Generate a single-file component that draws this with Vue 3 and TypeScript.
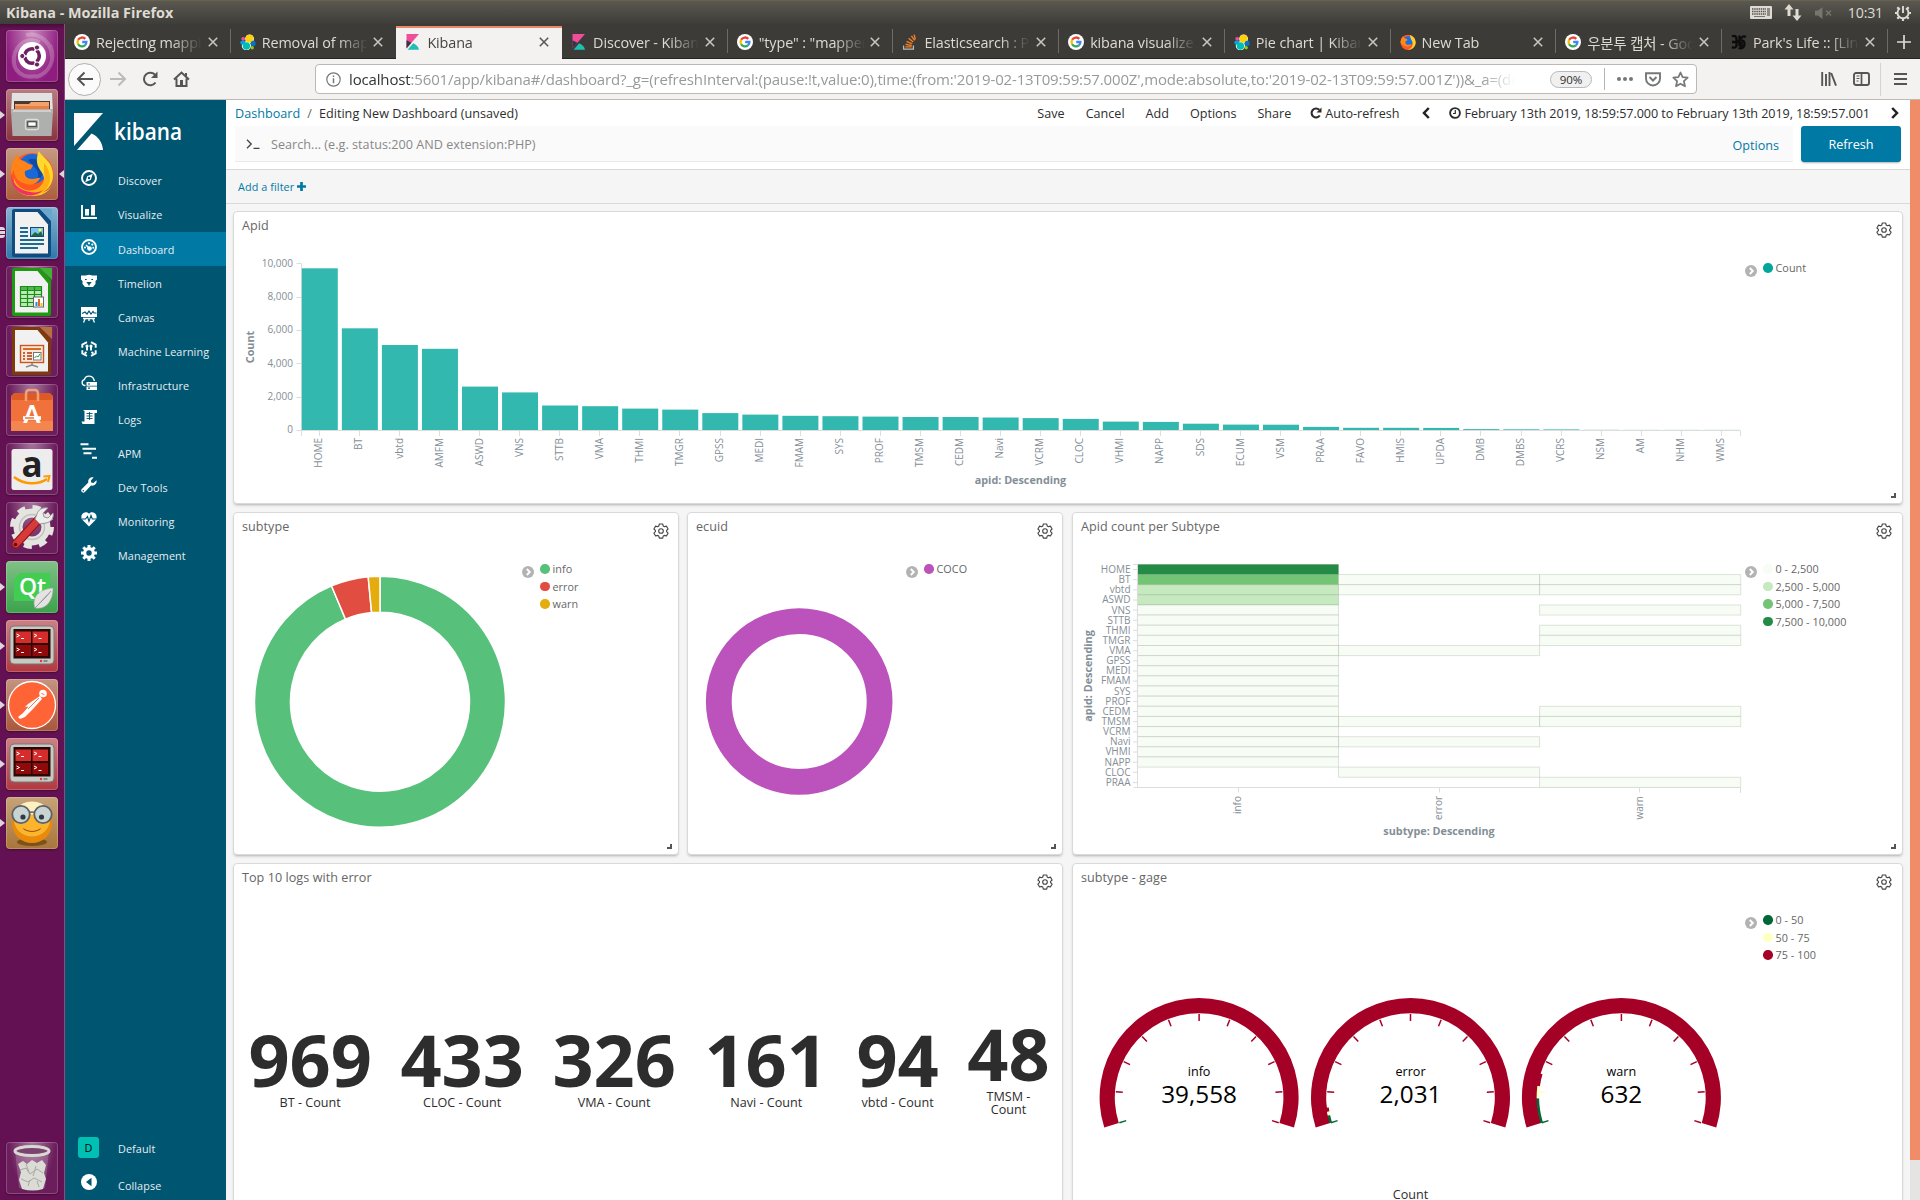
<script setup lang="ts">
interface Tab { title: string; icon: string; active?: boolean; noSep?: boolean }
interface NavItem { label: string; icon: string; active?: boolean }
interface LauncherItem { icon: string; tone: string; running?: boolean; many?: boolean; focused?: boolean }
interface LegendItem { label: string; color: string }

/* ---------- browser chrome ---------- */
const google = '<circle cx="8" cy="8" r="8" fill="#fff"/><g fill="none" stroke-width="2.3"><path d="M11.3 4.9A4.5 4.5 0 0 0 4.1 5.8" stroke="#ea4335"/><path d="M4.1 5.8A4.6 4.6 0 0 0 4.1 10.2" stroke="#fbbc05"/><path d="M4.1 10.2A4.5 4.5 0 0 0 10.9 11.4" stroke="#34a853"/><path d="M10.9 11.4A4.4 4.4 0 0 0 12.4 8H8.2" stroke="#4285f4"/></g>'
const elastic = '<circle cx="9.6" cy="4.8" r="4.4" fill="#fff"/><circle cx="6.400" cy="11.800" r="4.600" fill="#fff"/><circle cx="9.6" cy="4.8" r="4" fill="#fed10a"/><circle cx="3.2" cy="4.8" r="1.9" fill="#f04e98"/><ellipse cx="2.800" cy="8.6" rx="2.6" ry="2.2" fill="#0a9fdc"/><circle cx="6.4" cy="12" r="3.700" fill="#00bfb3"/><ellipse cx="13.2" cy="9.400" rx="2.500" ry="2.6" fill="#0077cc"/><circle cx="12.200" cy="13.7" r="1.7" fill="#93c90e"/>'
const kibanaFav = '<path d="M1.5 0H14L1.5 14.5z" fill="#f04e98"/><path d="M1.5 6.2L6.4 8.7L1.5 14.5z" fill="#343741"/><path d="M2.6 15.8L8.2 9.3C11.5 10.6 13.6 13 14 15.8z" fill="#20bfb3"/>'
const stack = '<path d="M1.6 11.5V15.2H11.4V11.5" fill="none" stroke="#bcbbbb" stroke-width="1.3"/><g stroke="#f48024" stroke-width="1.4"><path d="M3.4 12.9H9.6M3.6 10.3L9.7 11.6M4.6 7.3L10.2 9.9M6.6 4.2L11.2 8M9.4 1.8L12.6 6.4M12.1 .6L13.4 5.4"/></g>'
const foxFav = '<circle cx="8" cy="8.3" r="7.6" fill="#ff5a1f"/><circle cx="8.2" cy="7" r="4.8" fill="#1c6fe0"/><path d="M10 1c4 1.600 6 4.500 5.600 8.500-.5 3.800-4 6.500-8 6.300 4-1.100 5.600-3.600 5-7-.4-2.600-2.600-4-2.600-7.800z" fill="#ffcf2e"/><path d="M.6 8C.7 5 2 3 3.300 2c0 1.500.8 2.300 2.700 2.600l1.800 1.500-2.400 1.300c-.4 2 .8 3.400 2.800 3.400 1.600 0 2.400-.6 3.200-.5-1 2-3.800 3-6.400 1.700C2.600 11 1 9.800.6 8z" fill="#ff8a16"/>'
const gothic = '<g fill="none" stroke="#0c0c0c" stroke-width="2.3"><path d="M1 2.500c3-1.500 4.500 0 4.500 2.500v7c-1 2-3 2-4.500 1M1 8h5c5-3 7.500-1.500 7.500 2s-3 5-6 4M8.500 1.500v11M10 5c1-3 3-3 5-2M10.500 8v6"/></g>'
const tabs: Tab[] = [
  { title: 'Rejecting mapping', icon: google },
  { title: 'Removal of mapping', icon: elastic, noSep: true },
  { title: 'Kibana', icon: kibanaFav, active: true, noSep: true },
  { title: 'Discover - Kibana', icon: kibanaFav },
  { title: '"type" : "mapper_', icon: google },
  { title: 'Elasticsearch : Pa', icon: stack },
  { title: 'kibana visualize -', icon: google },
  { title: 'Pie chart | Kibana', icon: elastic },
  { title: 'New Tab', icon: foxFav },
  { title: '우분투 캡처 - Google', icon: google },
  { title: "Park's Life :: [Linux", icon: gothic }
]

/* ---------- desktop launcher ---------- */
const sheet = (edge: string, corner: string): string =>
  `<path d="M8 2H34L45 14V48Q45 50 43 50H8Q6 50 6 48V4Q6 2 8 2z" fill="${edge}"/><path d="M34 2H46V14z" fill="${corner}"/><path d="M9 5H31.500L42 17.500V46.500H9z" fill="#f1f1f1"/>`
const terminal = '<rect x="4" y="6" width="44" height="38" rx="4" fill="#c9c9c4" stroke="#777" stroke-width="1"/><rect x="7.500" y="9" width="37" height="29.500" fill="#2a0806"/><path d="M9.500 11.500h15.500V23H9.500z M26.500 11.500H42V23H26.500z" fill="#d62c2c"/><path d="M9.500 25h15.500v11H9.500z M26.500 25H42v11H26.500z" fill="#8f0b0b"/><path d="M10.500 14l3 1.500-3 1.500M15 18.500h3M28 14l3 1.500-3 1.500M32.500 18.500h3M10.500 28l3 1.500-3 1.500M15 32.500h3M28 28l3 1.500-3 1.500M32.500 32.500h3" fill="none" stroke="#fff" stroke-width="1"/><circle cx="35" cy="41" r="1.200" fill="#e33"/><rect x="37.500" y="40" width="4" height="2" fill="#888"/>'
const launcher: LauncherItem[] = [
  { tone: 'dash', icon: '<path d="M8 34C6 18 18 6 34 12M44 15c6 14 0 28-14 32M20 5c14-3 26 8 26 22M30 46C16 49 6 40 8 27" fill="none" stroke="#fff" stroke-opacity=".22" stroke-width="4"/><circle cx="26" cy="26" r="14" fill="#fff"/><circle cx="26" cy="26" r="7.300" fill="none" stroke="#6d2160" stroke-width="3.600"/><g stroke="#fff" stroke-width="1.600"><path d="M26 26L17 26M26 26L30.500 18M26 26L30.500 34"/></g><circle cx="26" cy="26" r="4.500" fill="#fff"/><g fill="#6d2160" stroke="#fff" stroke-width="1"><circle cx="16.300" cy="26" r="2.600"/><circle cx="31" cy="17.500" r="2.600"/><circle cx="31" cy="34.500" r="2.600"/></g>' },
  { tone: 'files', running: true, icon: '<path d="M6 4H46L47 24H5z" fill="#e2e2e2"/><path d="M8 12H44V23H8z" fill="#4a3a33"/><path d="M9 15h14l2-2h18v7H9z" fill="#f2a36b"/><path d="M9 17h34v4H9z" fill="#e9803f"/><path d="M5 20h42l-1.500 27h-39z" fill="#aeb0ae"/><path d="M7 21h38v2H7z" fill="#cfcfcf"/><rect x="19.500" y="30.500" width="13" height="10" rx="2" fill="#999" stroke="#ddd" stroke-width="1.300"/><rect x="21.800" y="32.800" width="8.400" height="4.500" fill="#fff" stroke="#333" stroke-width="1"/>' },
  { tone: 'fox', running: true, focused: true, icon: '<circle cx="26" cy="26.500" r="21.500" fill="#ff5722"/><circle cx="26.500" cy="21" r="15" fill="#1768d8"/><path d="M22 12c6-3 13 0 15 6s-2 14-8 16c4-5 4-9 1-13z" fill="#104aa8"/><path d="M33 3c2 5 9 8 12 15 5 12 0 23-10 27 6-1 11-6 12-11-3 11-14 16-25 13 11 0 17-8 16-17-.7-5-4-7-6-12-2-5-1-11 1-15z" fill="#ffd92e"/><path d="M38 25c2 8-3 15-10 17-10 2-18-4-20-12-1 12 8 19 19 18 11-1 18-10 17-20-1-5-3-10-6-13z" fill="#ffae13"/><path d="M5 27C4 18 8 10 12 6c0 4 2 6 6 7l5 3 4 1-2 4-6 2c-1 5 2 8 7 8 4 0 6-2 8-1-2 5-8 8-14 6-8-2-12-7-12-14z" fill="#ff8316"/><path d="M5 27c3 12 10 15 19 17 6 1 10 0 13-2-7 8-21 7-28-2-3-4-4-8-4-13z" fill="#f0306b"/>' },
  { tone: 'writer', running: true, many: true, icon: sheet('#0f4d80', '#6aa7cc') + '<g stroke="#1b6a94" stroke-width="1.900"><path d="M14 21h8M14 25h8M14 29h8M14 33h24M14 37h24M14 41h18"/></g><rect x="24.500" y="20.500" width="13" height="9" fill="#7cc4ee" stroke="#164a70"/><path d="M25 29l4-4 3 2 3-3 2 5z" fill="#264"/><circle cx="34" cy="23" r="1.500" fill="#ff4"/>' },
  { tone: 'plain', icon: sheet('#1d9a10', '#3fb332') + '<path d="M14 20h22v20H14z" fill="#b9ecb4"/><path d="M14 20h22v4H14z" fill="#4fb848"/><path d="M14.500 20.500h21v20h-21zM14 24.500h22M14 28.500h22M14 32.500h22M14 36.500h22M21.500 20v20M28.500 20v20" fill="none" stroke="#1c8b18" stroke-width="1.200"/><rect x="27.500" y="31" width="10" height="10" fill="#fff" stroke="#666"/><path d="M29.500 36h2v4h-2z" fill="#1d8be0"/><path d="M32 33h2v7h-2z" fill="#e06a1d"/><path d="M34.500 37h2v3h-2z" fill="#f5c21b"/>' },
  { tone: 'plain', icon: sheet('#7f3a0c', '#b5713f') + '<rect x="14.500" y="20.500" width="23" height="17" fill="#fbe8da" stroke="#c9571a" stroke-width="1.400"/><path d="M17 24h18" stroke="#d96b22" stroke-width="2"/><path d="M17 28h2M21 28h5M17 31h2M21 31h5M17 34h2M21 34h5" stroke="#b3390c" stroke-width="1.500"/><rect x="27.500" y="27.500" width="7.500" height="7.500" fill="#fff" stroke="#777"/><path d="M28.500 33l2-2 1.500 1 2-3" stroke="#2a9d2a" fill="none"/><path d="M26 38v2l-6 2M26 40l6 2" stroke="#888" stroke-width="1.500" fill="none"/>' },
  { tone: 'plain', icon: '<path d="M5 12h42v35H5z" fill="#f0713a"/><path d="M5 12l3-3H44l3 3-1 4H6z" fill="#dd5a26"/><path d="M5 37h42v10H5z" fill="#f4854f"/><path d="M20 17V10q0-4 3-4h6q3 0 3 4v7" fill="none" stroke="#f2a07a" stroke-width="2.500"/><text x="26" y="39" text-anchor="middle" font-family="Lato" font-weight="900" font-size="24" fill="#fff">A</text><path d="M17 34h18" stroke="#fff" stroke-width="3.600"/><path d="M19 34h9" stroke="#f0713a" stroke-width="1.500"/>' },
  { tone: 'plain', icon: '<rect x="5.500" y="6" width="41" height="41" rx="2.500" fill="#ededed"/><text x="26" y="33.500" text-anchor="middle" font-family="Open Sans" font-weight="700" font-size="35" fill="#222">a</text><path d="M8 34c10 8 24 8 33 2" stroke="#ff9900" stroke-width="2.600" fill="none"/><path d="M37.500 33.500l6-.5-1.500 6" stroke="#ff9900" stroke-width="2" fill="none"/>' },
  { tone: 'plain', icon: '<g fill="none" stroke="#e4e4e0"><circle cx="26" cy="25" r="14" stroke-width="9"/><circle cx="26" cy="25" r="19.500" stroke-width="5" stroke-dasharray="8 7.300"/></g><circle cx="26" cy="25" r="12.500" fill="none" stroke="#c2c2be" stroke-width="1.500"/><path d="M10 42L33 17" stroke="#9d1414" stroke-width="9" stroke-linecap="round"/><path d="M10 42L33 17" stroke="#d73a3a" stroke-width="6.500" stroke-linecap="round"/><circle cx="9.500" cy="42.500" r="1.800" fill="#5c1010"/><path d="M29 17l5 5 6-1c5-1 8-5 7-10l-5 5-4-1-1-4 5-5c-6-1-10 2-11 6z" fill="#eee" stroke="#999" stroke-width="1"/>' },
  { tone: 'qt', running: true, icon: '<path d="M14 12H44V40H8V18z" fill="#41cd52"/><text x="26.500" y="34" text-anchor="middle" font-family="Open Sans" font-weight="600" font-size="23" fill="#fff">Qt</text><path d="M47 27C34 28 25 36 29 47c11 2 18-7 18-20z" fill="#e3e3e3" stroke="#aaa" stroke-width=".6"/><path d="M29 47C34 42 40 36 45 30" stroke="#999" stroke-width="1"/>' },
  { tone: 'term', running: true, icon: terminal },
  { tone: 'postman', running: true, icon: '<circle cx="26" cy="26" r="23.500" fill="#ff6436" stroke="#fff" stroke-width="1.300"/><circle cx="37" cy="14.500" r="3.800" fill="#fff"/><path d="M34 17L22 25L19 28L22.500 27.500L17 34L12 38L14 40L19 38L27 30L36 20z" fill="#fff"/><path d="M33 19L22 30M35.500 14.500l3 1" stroke="#ff6436" stroke-width=".9"/>' },
  { tone: 'term', running: true, icon: terminal },
  { tone: 'face', running: true, icon: '<ellipse cx="26" cy="45" rx="15" ry="4" fill="#5a3506" fill-opacity=".6"/><ellipse cx="26" cy="26" rx="20" ry="20" fill="#e88a0c"/><ellipse cx="26" cy="22.500" rx="18" ry="17" fill="#fbb42c"/><ellipse cx="26" cy="11" rx="13" ry="6.500" fill="#fff0c4"/><path d="M23 16q3-2 6 0" stroke="#59636b" stroke-width="1.600" fill="none"/><g stroke="#59636b" stroke-width="1.800" fill="#c9d3cf"><circle cx="15" cy="17.500" r="8.700"/><circle cx="37" cy="17.500" r="8.700"/></g><circle cx="17" cy="20" r="2.600" fill="#2c3b44"/><circle cx="35.500" cy="20" r="2.600" fill="#2c3b44"/><path d="M17 31c5 4 13 4 18 0-2 5-16 5-18 0z" fill="#8b3b04"/>' }
]
const trash = '<path d="M9 9l4 37q13 4 26 0l4-37z" fill="#fff" fill-opacity=".18"/><ellipse cx="26" cy="9" rx="17" ry="4.500" fill="#7b4470" stroke="#d9d9d4" stroke-width="3"/><path d="M12 22l5-3 4 3 5-4 5 3 5-3 4 5-2 8 2 6-3 10q-10 3-21 0l-3-9 2-8z" fill="#dcdcd6"/><path d="M14 28l6-2 4 6 7-5 6 4M15 37l7 3 6-4 8 4M20 22l3 8M30 24l-3 10M22 44l2-6M33 45l-2-6" fill="none" stroke="#a9a9a4" stroke-width="1"/>'

/* ---------- Kibana navigation ---------- */
const nav: NavItem[] = [
  { label: 'Discover', icon: '<circle cx="8" cy="8" r="7" fill="none" stroke="#fff" stroke-width="1.900"/><path d="M11.800 3.800L9.800 9.800L4.200 12.200L6.200 6.200z" fill="#fff"/><circle cx="8" cy="8" r="1.200" fill="#005571"/>' },
  { label: 'Visualize', icon: '<path d="M1 1v13h15" fill="none" stroke="#fff" stroke-width="1.900"/><path d="M4 5h4v6.500H4zM10 1h4v10.500h-4z" fill="#fff"/>' },
  { label: 'Dashboard', active: true, icon: '<circle cx="8" cy="8" r="7" fill="none" stroke="#fff" stroke-width="1.900"/><circle cx="8.500" cy="9.500" r="2.300" fill="#fff"/><path d="M5 6L8.500 9.500" stroke="#fff" stroke-width="1.500"/><g fill="#fff"><circle cx="8" cy="4.300" r="1.100"/><circle cx="11.300" cy="5.600" r="1.100"/><circle cx="4" cy="8.600" r="1"/><circle cx="12.200" cy="8.800" r="1"/></g>' },
  { label: 'Timelion', icon: '<path d="M0 2.500h4.500L8 1.800l3.500.7H16v4l-1.500 1.500v3L12 14H4L1.500 11V8L0 6.500z" fill="#fff"/><path d="M4 6.500h1.700M10.300 6.500H12M6.500 9.500h3L8 11.500zM8 11v1.500" stroke="#005571" stroke-width="1.200" fill="#005571"/>' },
  { label: 'Canvas', icon: '<path d="M0 0h16v10H0z" fill="#fff"/><path d="M1 6.500L4 5l2 2 2-3 2 3 2-2.500L13 6h2.500" fill="none" stroke="#005571" stroke-width="1.200"/><path d="M2 11.500h12M4.500 11l-2 4.500M8 11v3M11.500 11l2 4.500" stroke="#fff" stroke-width="1.300"/>' },
  { label: 'Machine Learning', icon: '<g fill="none" stroke="#fff" stroke-width="1.900"><path d="M6 1.200L1.300 3.600v3.200M1.300 9.300v3.200l4.700 2.400M10 1.200l4.700 2.400v3.200M14.700 9.300v3.200l-4.700 2.400M6 4v5.500M10 4v5.500M5.500 11l-1.800 1.500M10.500 11l1.800 1.500"/></g><g fill="#fff"><circle cx="6" cy="5" r="1.600"/><circle cx="10" cy="5" r="1.600"/></g>' },
  { label: 'Infrastructure', icon: '<path d="M4.500 10.500H3.500A3 3 0 0 1 3.300 4.700A5 5 0 0 1 12.800 4.400L13.500 6" fill="none" stroke="#fff" stroke-width="1.400"/><path d="M5.500 7H16v3.700H5.500zM5.500 11.600H16V15H5.500z" fill="#fff"/><path d="M7 9h2M7 13.200h2" stroke="#005571" stroke-width="1.200"/>' },
  { label: 'Logs', icon: '<path d="M2 1h14v3h-2.500v11H1.500L.5 12.500H3.500V2z" fill="#fff"/><path d="M5.500 4.500h6M5.500 7h6M5.500 9.500h6M8.500 3v8" stroke="#005571" stroke-width=".9"/>' },
  { label: 'APM', icon: '<path d="M-.5 1.300H7.500M1.500 5.800H15M2.500 10.200H10.500M11 14.700H16" stroke="#fff" stroke-width="2"/>' },
  { label: 'Dev Tools', icon: '<path d="M15.500 3.300L12.500 6L10.200 5.600L9.900 3.500L12.600.5C9.500-.3 6.800 2 7.300 5.500L.6 12.300C-.8 14 1.800 16.800 3.700 15.300L10 8.600C13.500 9.300 16.300 6.500 15.500 3.300z" fill="#fff"/><circle cx="2.300" cy="13.700" r=".8" fill="#005571"/>' },
  { label: 'Monitoring', icon: '<path d="M8 15.500L1.300 8.800C-2 4 4-1.500 8 2.800C12-1.500 18 4 14.700 8.800z" fill="#fff"/><path d="M1 8h3.500L6.500 5.500L8 10.500L10 4.500L11.300 8H15" fill="none" stroke="#005571" stroke-width="1.100"/>' },
  { label: 'Management', icon: '<circle cx="8" cy="8" r="4.300" fill="none" stroke="#fff" stroke-width="3.200"/><path d="M8 0v3M8 13v3M0 8h3M13 8h3M2.300 2.300l2.200 2.200M11.500 11.500l2.200 2.200M2.300 13.700l2.200-2.200M11.500 4.500l2.200-2.200" stroke="#fff" stroke-width="3"/>' }
]

/* ---------- charts ---------- */
const bars: [string, number][] = [
  ['HOME', 161.7], ['BT', 101.7], ['vbtd', 85], ['AMFM', 81.2], ['ASWD', 43.4], ['VNS', 37.6], ['STTB', 24.5], ['VMA', 23.8],
  ['THMI', 21.4], ['TMGR', 20.4], ['GPSS', 16.9], ['MEDI', 15.4], ['FMAM', 14.2], ['SYS', 13.8], ['PROF', 13.4], ['TMSM', 13],
  ['CEDM', 13], ['Navi', 12.5], ['VCRM', 11.9], ['CLOC', 11.1], ['VHMI', 8.4], ['NAPP', 8.1], ['SDS', 6.3], ['ECUM', 5.4],
  ['VSM', 5.3], ['PRAA', 3.1], ['FAVO', 2.2], ['HMIS', 2.2], ['UPDA', 2.1], ['DMB', 0.9], ['DMBS', 0.7], ['VCRS', 0.6],
  ['NSM', 0.15], ['AM', 0.1], ['NHM', 0.1], ['WMS', 0.1]
]
const yTicks = ['10,000', '8,000', '6,000', '4,000', '2,000', '0']

const heatRows = ['HOME', 'BT', 'vbtd', 'ASWD', 'VNS', 'STTB', 'THMI', 'TMGR', 'VMA', 'GPSS', 'MEDI', 'FMAM', 'SYS', 'PROF', 'CEDM', 'TMSM', 'VCRM', 'Navi', 'VHMI', 'NAPP', 'CLOC', 'PRAA']
const heatCols = ['info', 'error', 'warn']
const shades = ['#f7fcf5', '#c7e9c0', '#74c476', '#238b45']
const rowH = 10.136
const colW = 201.1
const heatCells: { c: number; r: number; fill: string }[] = [
  ...heatRows.slice(0, 20).map((_, r) => ({ c: 0, r, fill: shades[r === 0 ? 3 : r === 1 ? 2 : r < 4 ? 1 : 0] })),
  ...[1, 2, 8, 15, 17, 20].map(r => ({ c: 1, r, fill: shades[0] })),
  ...[1, 2, 4, 6, 7, 14, 15, 21].map(r => ({ c: 2, r, fill: shades[0] }))
]

const point = (cx: number, cy: number, r: number, deg: number): string => {
  const a = (deg - 90) * Math.PI / 180
  return `${(cx + r * Math.cos(a)).toFixed(2)} ${(cy + r * Math.sin(a)).toFixed(2)}`
}
const ring = (cx: number, cy: number, ro: number, ri: number, from: number, to: number): string => {
  const big = to - from > 180 ? 1 : 0
  return `M${point(cx, cy, ro, from)}A${ro} ${ro} 0 ${big} 1 ${point(cx, cy, ro, to)}L${point(cx, cy, ri, to)}A${ri} ${ri} 0 ${big} 0 ${point(cx, cy, ri, from)}Z`
}
const slices = [
  { color: '#57c17b', from: 0, to: 337.3 },
  { color: '#e24d42', from: 337.3, to: 354.6 },
  { color: '#e5ac0e', from: 354.6, to: 360 }
]

const sweep = 107.6
const gauges = [
  { name: 'info', text: '39,558', value: 39558, cx: 1199.1 },
  { name: 'error', text: '2,031', value: 2031, cx: 1410.5 },
  { name: 'warn', text: '632', value: 632, cx: 1621.4 }
]
const bands = [
  { from: 0, to: 50, color: '#006837' },
  { from: 50, to: 75, color: '#ffffbe' },
  { from: 75, to: 100, color: '#a50026' }
]
const tickColor = (i: number, value: number): string => {
  const v = value * i / 10
  return v < 50 ? '#006837' : v < 75 ? '#ffffbe' : '#a50026'
}
const angle = (v: number, max: number): number => -sweep + 2 * sweep * v / max

const legends: Record<string, LegendItem[]> = {
  apid: [{ label: 'Count', color: '#00a69b' }],
  subtype: [{ label: 'info', color: '#57c17b' }, { label: 'error', color: '#e24d42' }, { label: 'warn', color: '#e5ac0e' }],
  ecuid: [{ label: 'COCO', color: '#bc52bc' }],
  heat: [{ label: '0 - 2,500', color: '#f7fcf5' }, { label: '2,500 - 5,000', color: '#c7e9c0' }, { label: '5,000 - 7,500', color: '#74c476' }, { label: '7,500 - 10,000', color: '#238b45' }],
  gauge: [{ label: '0 - 50', color: '#006837' }, { label: '50 - 75', color: '#ffffbe' }, { label: '75 - 100', color: '#a50026' }]
}
const metrics = [['969', 'BT - Count'], ['433', 'CLOC - Count'], ['326', 'VMA - Count'], ['161', 'Navi - Count'], ['94', 'vbtd - Count'], ['48', 'TMSM - Count']]
const gear = '<path d="M6.300 1h3.400l.5 2 1.200.7 2-.6 1.700 2.900-1.500 1.400v1.300l1.500 1.400-1.700 2.900-2-.6-1.200.7-.5 2H6.300l-.5-2-1.200-.7-2 .6L.9 10.100l1.500-1.400V7.400L.9 6l1.700-2.900 2 .6L5.800 3z" fill="none" stroke="#444" stroke-width="1.100" stroke-linejoin="round"/><circle cx="8" cy="8" r="2.300" fill="none" stroke="#444" stroke-width="1.100"/>'
const chevron = '<circle cx="6" cy="6" r="6" fill="#b3b3b3"/><path d="M4.800 3L7.800 6L4.800 9" fill="none" stroke="#fff" stroke-width="1.900"/>'
</script>

<template>
  <div class="desktop">
    <div class="menubar">
      <span class="window-title">Kibana - Mozilla Firefox</span>
      <div class="tray">
        <svg class="kbd" width="22" height="13" viewBox="0 0 22 13"><rect width="22" height="13" rx="1" fill="#dfdbd2"/><path d="M2 3h14M2 5.500h14M2 8h14" stroke="#55534d" stroke-width="1.600" stroke-dasharray="1.500 .7"/><path d="M4 10.500h11" stroke="#777" /><path d="M17 2h3v8h-3z" fill="#8b8a84"/></svg>
        <svg class="net" width="18" height="17" viewBox="0 0 18 17"><path d="M5 0L.5 5.500H3.500V12H6.500V5.500H9.500zM13 17L8.500 11.500H11.500V5H14.500V11.500H17.500z" fill="#dfdbd2"/></svg>
        <svg class="mute" width="18" height="12" viewBox="0 0 18 12"><path d="M0 3.500H3L7.500 0V12L3 8.500H0z" fill="#77756d"/><path d="M11 3.500l5 5M16 3.500l-5 5" stroke="#77756d" stroke-width="1.500"/></svg>
        <span class="clock">10:31</span>
        <svg width="16" height="16" viewBox="0 0 16 16"><path d="M5 3.200A5.500 5.500 0 1 0 11 3.200M8 1v7" fill="none" stroke="#dfdbd2" stroke-width="1.900"/><path d="M0 8h2.500M13.500 8H16M2.300 2.300L4 4M12 4l1.700-1.700M2.300 13.700L4 12M12 12l1.700 1.700M8 13.500V16" stroke="#dfdbd2" stroke-width="2.200"/></svg>
      </div>
    </div>

    <div class="workspace">
      <aside class="launcher">
        <div v-for="(item, i) in launcher" :key="i" class="tile" :class="item.tone">
          <svg width="52" height="52" viewBox="0 0 52 52" v-html="item.icon"></svg>
          <i v-if="item.running && !item.many" class="pip"></i>
          <i v-if="item.many" class="pip multi"></i>
          <i v-if="item.focused" class="pip right"></i>
        </div>
        <div class="tile plain trash"><svg width="52" height="52" viewBox="0 0 52 52" v-html="trash"></svg></div>
      </aside>

      <section class="browser">
        <div class="tabstrip">
          <div v-for="tab in tabs" :key="tab.title" class="tab" :class="{ active: tab.active, plainend: tab.noSep }">
            <svg class="fav" width="16" height="16" viewBox="0 0 16 16" v-html="tab.icon"></svg>
            <span class="tab-title">{{ tab.title }}</span>
            <svg class="close" width="10" height="10" viewBox="0 0 10 10"><path d="M.8.8l8.400 8.400M9.200.8L.8 9.200" fill="none" stroke="currentColor" stroke-width="1.600"/></svg>
          </div>
          <svg class="plus" width="14" height="14" viewBox="0 0 14 14"><path d="M7 0v14M0 7h14" stroke="#dedad2" stroke-width="1.700"/></svg>
        </div>

        <div class="toolbar">
          <span class="back"><svg width="18" height="16" viewBox="0 0 18 16"><path d="M17 8H2M8.500 1.500L2 8l6.500 6.500" fill="none" stroke="#555" stroke-width="2"/></svg></span>
          <svg class="fwd" width="18" height="16" viewBox="0 0 18 16"><path d="M1 8H16M9.500 1.500L16 8l-6.500 6.500" fill="none" stroke="#bbb" stroke-width="2"/></svg>
          <svg class="reload" width="17" height="16" viewBox="0 0 17 16"><path d="M13.500 11.500A6.300 6.300 0 1 1 13.300 4.200" fill="none" stroke="#555" stroke-width="2"/><path d="M15.500.5V7H9z" fill="#555"/></svg>
          <svg class="home" width="17" height="16" viewBox="0 0 17 16"><path d="M1 8.500L8.500 1.500L16 8.500M3.500 7.500V15H13.500V7.500" fill="none" stroke="#555" stroke-width="2"/><path d="M7 9h3v6H7zM12 2h2v3h-2z" fill="#555"/></svg>
          <div class="urlbar">
            <svg width="15" height="15" viewBox="0 0 15 15"><circle cx="7.500" cy="7.500" r="6.700" fill="none" stroke="#777" stroke-width="1.200"/><path d="M7.500 6.300v5M7.500 3.500v1.600" stroke="#777" stroke-width="1.500"/></svg>
            <span class="url"><b>localhost</b>:5601/app/kibana#/dashboard?_g=(refreshInterval:(pause:!t,value:0),time:(from:'2019-02-13T09:59:57.000Z',mode:absolute,to:'2019-02-13T09:59:57.001Z'))&amp;_a=(de</span>
            <span class="zoom">90%</span>
            <i class="rule"></i>
            <svg class="dots" width="16" height="4" viewBox="0 0 16 4"><g fill="#777"><circle cx="2" cy="2" r="2"/><circle cx="8" cy="2" r="2"/><circle cx="14" cy="2" r="2"/></g></svg>
            <svg class="pocket" width="16" height="15" viewBox="0 0 16 15"><path d="M1 1.200H15V6.500A7 7 0 0 1 1 6.500z" fill="none" stroke="#777" stroke-width="1.900"/><path d="M4.500 5L8 8.500L11.500 5" fill="none" stroke="#777" stroke-width="2"/></svg>
            <svg width="17" height="17" viewBox="0 0 17 17"><path d="M8.500 1.500L10.600 6.200L15.700 6.700L11.900 10.200L13 15.300L8.500 12.700L4 15.300L5.100 10.200L1.300 6.700L6.400 6.200z" fill="none" stroke="#777" stroke-width="1.700" stroke-linejoin="round"/></svg>
          </div>
          <svg class="library" width="16" height="14" viewBox="0 0 16 14"><path d="M1.200 0v14M5 2v12M8.500 0v14M10.200 1L15 13.700" stroke="#555" stroke-width="1.900"/></svg>
          <svg class="side" width="17" height="14" viewBox="0 0 17 14"><rect x="1" y="1" width="15" height="12" rx="2" fill="none" stroke="#555" stroke-width="1.900"/><path d="M8.500 1v12" stroke="#555" stroke-width="1.700"/><path d="M3.500 4h3M3.500 6.500h3M3.500 9h2" stroke="#555"/></svg>
          <i class="bar-rule"></i>
          <svg class="menu" width="13" height="12" viewBox="0 0 13 12"><path d="M0 1h13M0 6h13M0 11h13" stroke="#555" stroke-width="2"/></svg>
        </div>

        <div class="page">
          <nav class="sidebar">
            <div class="brand">
              <svg width="29" height="37" viewBox="0 0 29 37"><path d="M0 0H29L0 33z" fill="#fff"/><path d="M3 37L17.500 20.500C24.500 23.500 28.500 30 29 37z" fill="#fff"/></svg>
              <svg class="word" width="70" height="28" viewBox="0 0 70 28"><text x="0" y="22" textLength="68" lengthAdjust="spacingAndGlyphs">kibana</text></svg>
            </div>
            <a v-for="item in nav" :key="item.label" class="nav-item" :class="{ active: item.active }">
              <svg width="16" height="16" viewBox="0 0 16 16" v-html="item.icon"></svg>
              <span>{{ item.label }}</span>
            </a>
            <div class="nav-foot">
              <a class="space"><b>D</b><span>Default</span></a>
              <a class="collapse"><svg width="16" height="16" viewBox="0 0 16 16"><circle cx="8" cy="8" r="8" fill="#fff"/><path d="M10.500 3.800V12.200L5 8z" fill="#005571"/></svg><span>Collapse</span></a>
            </div>
          </nav>

          <main class="content">
            <header class="topnav">
              <div class="crumbs"><a>Dashboard</a><span class="slash">/</span><span>Editing New Dashboard (unsaved)</span></div>
              <div class="actions">
                <a>Save</a><a>Cancel</a><a>Add</a><a>Options</a><a>Share</a>
                <a class="auto"><svg width="12" height="12" viewBox="0 0 12 12"><path d="M9.800 8.500A4.500 4.500 0 1 1 9.300 2.800" fill="none" stroke="#2d2d2d" stroke-width="2.100"/><path d="M11.500.5V5.500H6.500z" fill="#2d2d2d"/></svg>Auto-refresh</a>
                <svg class="prev" width="8" height="12" viewBox="0 0 8 12"><path d="M6.800 1L2 6l4.800 5" fill="none" stroke="#222" stroke-width="2.500"/></svg>
                <a class="range"><svg width="12" height="12" viewBox="0 0 12 12"><circle cx="6" cy="6" r="4.900" fill="none" stroke="#2d2d2d" stroke-width="1.900"/><path d="M6.300 3v3.500H4" fill="none" stroke="#2d2d2d" stroke-width="1.200"/></svg>February 13th 2019, 18:59:57.000 to February 13th 2019, 18:59:57.001</a>
                <svg class="next" width="8" height="12" viewBox="0 0 8 12"><path d="M1.200 1L6 6l-4.800 5" fill="none" stroke="#222" stroke-width="2.500"/></svg>
              </div>
            </header>
            <div class="searchrow">
              <div class="search">
                <svg width="14" height="10" viewBox="0 0 14 10"><path d="M1 .8L5.200 5L1 9.200M7.500 9.300H13.500" fill="none" stroke="#444" stroke-width="1.300"/></svg>
                <span>Search... (e.g. status:200 AND extension:PHP)</span>
                <a>Options</a>
              </div>
              <button>Refresh</button>
            </div>
            <div class="filterbar"><a>Add a filter</a><svg width="9" height="9" viewBox="0 0 9 9"><path d="M4.500 0v9M0 4.500h9" stroke="#0079a5" stroke-width="2.700"/></svg></div>

            <div class="grid">
              <div class="row first">
                <article class="panel">
                  <div class="head"><h2>Apid</h2><svg width="16" height="16" viewBox="0 0 16 16" v-html="gear"></svg></div>
                  <div class="body">
                    <svg class="chart" width="1508" height="261" viewBox="234 242 1508 261">
                      <g class="axis">
                        <path d="M296.500 263.500H301.500V436M296.500 430.500H1740.500V436M296.500 297.500h5M296.500 330.500h5M296.500 363.500h5M296.500 397.500h5"/>
                        <path v-for="(b, i) in bars" :key="b[0]" :d="`M${319.5 + Math.round(40.05 * i)} 430V436`"/>
                      </g>
                      <rect v-for="(b, i) in bars" :key="b[0]" class="bar" :x="301.8 + 40.05 * i" :y="430 - b[1]" width="36" :height="b[1]"/>
                      <text v-for="(t, i) in yTicks" :key="t" x="293" :y="266.500 + 33.350 * i" text-anchor="end">{{ t }}</text>
                      <text v-for="(b, i) in bars" :key="b[0]" :transform="`translate(${322.4 + 40.05 * i} 438) rotate(-90)`" text-anchor="end">{{ b[0] }}</text>
                      <text class="title" transform="translate(254 347) rotate(-90)" text-anchor="middle">Count</text>
                      <text class="title" x="1020.500" y="483.500" text-anchor="middle">apid: Descending</text>
                    </svg>
                    <div class="legend"><svg width="12" height="12" viewBox="0 0 12 12" v-html="chevron"></svg><ul><li v-for="l in legends.apid" :key="l.label"><i :style="{ background: l.color }"></i>{{ l.label }}</li></ul></div>
                  </div>
                  <i class="grip"></i>
                </article>
              </div>

              <div class="row second">
                <article class="panel w1">
                  <div class="head"><h2>subtype</h2><svg width="16" height="16" viewBox="0 0 16 16" v-html="gear"></svg></div>
                  <div class="body">
                    <svg class="chart" width="285" height="311" viewBox="234 543 285 311">
                      <path v-for="s in slices" :key="s.color" :d="ring(380, 701.7, 125.5, 89.500, s.from, s.to)" :fill="s.color" stroke="#fff" stroke-width="1.500"/>
                    </svg>
                    <div class="legend"><svg width="12" height="12" viewBox="0 0 12 12" v-html="chevron"></svg><ul><li v-for="l in legends.subtype" :key="l.label"><i :style="{ background: l.color }"></i>{{ l.label }}</li></ul></div>
                  </div>
                  <i class="grip"></i>
                </article>
                <article class="panel w2">
                  <div class="head"><h2>ecuid</h2><svg width="16" height="16" viewBox="0 0 16 16" v-html="gear"></svg></div>
                  <div class="body">
                    <svg class="chart" width="215" height="311" viewBox="688 543 215 311"><circle cx="799.200" cy="701.500" r="80.400" fill="none" stroke="#bc52bc" stroke-width="25.800"/></svg>
                    <div class="legend"><svg width="12" height="12" viewBox="0 0 12 12" v-html="chevron"></svg><ul><li v-for="l in legends.ecuid" :key="l.label"><i :style="{ background: l.color }"></i>{{ l.label }}</li></ul></div>
                  </div>
                  <i class="grip"></i>
                </article>
                <article class="panel w3">
                  <div class="head"><h2>Apid count per Subtype</h2><svg width="16" height="16" viewBox="0 0 16 16" v-html="gear"></svg></div>
                  <div class="body">
                    <svg class="chart" width="669" height="311" viewBox="1073 543 669 311">
                      <rect v-for="c in heatCells" :key="`${c.c}-${c.r}`" class="cell" :x="1137.4 + colW * c.c" :y="564.4 + rowH * c.r" :width="colW" :height="rowH" :fill="c.fill"/>
                      <g class="axis">
                        <path d="M1137.500 564V787.500M1133.500 787.500H1740.500V793M1133 564.500h4M1238.500 787v5.500M1439.500 787v5.500M1639.500 787v5.500"/>
                        <path v-for="(r, i) in heatRows" :key="r" :d="`M1133 ${(569.6 + rowH * i).toFixed(1)}h4.500`"/>
                      </g>
                      <text v-for="(r, i) in heatRows" :key="r" x="1130.500" :y="573 + rowH * i" text-anchor="end">{{ r }}</text>
                      <text v-for="(c, i) in heatCols" :key="c" :transform="`translate(${1241 + 201 * i} 796) rotate(-90)`" text-anchor="end">{{ c }}</text>
                      <text class="title" transform="translate(1092 676) rotate(-90)" text-anchor="middle">apid: Descending</text>
                      <text class="title" x="1439" y="834.500" text-anchor="middle">subtype: Descending</text>
                    </svg>
                    <div class="legend"><svg width="12" height="12" viewBox="0 0 12 12" v-html="chevron"></svg><ul><li v-for="l in legends.heat" :key="l.label"><i :style="{ background: l.color }"></i>{{ l.label }}</li></ul></div>
                  </div>
                  <i class="grip"></i>
                </article>
              </div>

              <div class="row third">
                <article class="panel w4">
                  <div class="head"><h2>Top 10 logs with error</h2><svg width="16" height="16" viewBox="0 0 16 16" v-html="gear"></svg></div>
                  <div class="metrics">
                    <div v-for="m in metrics" :key="m[1]" class="metric"><strong>{{ m[0] }}</strong><span>{{ m[1] }}</span></div>
                  </div>
                </article>
                <article class="panel w3">
                  <div class="head"><h2>subtype - gage</h2><svg width="16" height="16" viewBox="0 0 16 16" v-html="gear"></svg></div>
                  <div class="body">
                    <svg class="chart gauge" width="669" height="306" viewBox="1073 894 669 306">
                      <g v-for="g in gauges" :key="g.name">
                        <path :d="ring(g.cx, 1097.5, 99.500, 84.300, -sweep, sweep)" fill="#a50026"/>
                        <path v-for="b in bands" :key="b.from" :d="ring(g.cx, 1097.5, 84.800, 82.300, angle(b.from, g.value), angle(b.to, g.value))" :fill="b.color"/>
                        <path v-for="i in 11" :key="i" :d="`M${point(g.cx, 1097.5, 83.5, -sweep + 21.52 * (i - 1))}L${point(g.cx, 1097.5, 76.5, -sweep + 21.52 * (i - 1))}`" :stroke="tickColor(i - 1, g.value)" stroke-width="1.500"/>
                        <text class="name" :x="g.cx" y="1076" text-anchor="middle">{{ g.name }}</text>
                        <text class="value" :x="g.cx" y="1103" text-anchor="middle">{{ g.text }}</text>
                      </g>
                      <text class="name soft" x="1410.500" y="1199" text-anchor="middle">Count</text>
                    </svg>
                    <div class="legend"><svg width="12" height="12" viewBox="0 0 12 12" v-html="chevron"></svg><ul><li v-for="l in legends.gauge" :key="l.label"><i :style="{ background: l.color }"></i>{{ l.label }}</li></ul></div>
                  </div>
                </article>
              </div>
            </div>
          </main>
          <div class="scroll"><i></i></div>
        </div>
      </section>
    </div>
  </div>
</template>

<style>
html, body { margin: 0; overflow: hidden; }
</style>

<style scoped>
* { box-sizing: border-box; }
svg { display: block; flex: none; }
a { color: #0079a5; text-decoration: none; }
.desktop { width: 1920px; height: 1200px; display: flex; flex-direction: column; overflow: hidden; font-family: "Open Sans", "Noto Sans", "Noto Sans CJK KR", sans-serif; font-size: 12.6px; color: #2d2d2d; background: #3c3b37; }

.menubar { height: 24px; flex: none; display: flex; align-items: center; justify-content: space-between; padding: 0 9px 0 6px; background: linear-gradient(#5d5b4f 0, #58564e 6%, #3e3d39); color: #dfdbd2; border-top: 1px solid #66644f; }
.window-title { font-weight: 700; font-size: 14.4px; }
.tray { display: flex; align-items: center; font-size: 14.2px; }
.kbd { margin-right: 12px; }
.net { margin-right: 13px; }
.mute { margin-right: 15px; }
.clock { margin-right: 12px; letter-spacing: -.2px; }

.workspace { flex: 1; display: flex; min-height: 0; }
.launcher { width: 65px; flex: none; display: flex; flex-direction: column; gap: 7px; padding: 6px 6px 6px 6px; background: linear-gradient(#470c3b 0, #641153 5px); border-right: 1px solid #8d4b7f; }
.tile { position: relative; width: 52px; height: 52px; flex: none; border-radius: 4px; box-shadow: inset 0 0 0 1px rgba(255,255,255,.2), 0 1px 2px rgba(0,0,0,.35); background: radial-gradient(ellipse at 50% -10%, rgba(255,255,255,.45), rgba(255,255,255,.05) 65%); }
.tile.dash { background: radial-gradient(ellipse at 50% 0, #c98bbd, #8f1d80 75%); }
.tile.files { background: linear-gradient(#b87c80, #8a3340); }
.tile.fox { background: linear-gradient(#c59b82, #ad5d3b); }
.tile.writer { background: linear-gradient(#86b4d2, #3177aa); }
.tile.qt { background: linear-gradient(#81c086, #3ba34c); }
.tile.term { background: linear-gradient(#cc8185, #b03940); }
.tile.postman { background: linear-gradient(#c49480, #a9573a); }
.tile.face { background: linear-gradient(#c6a37a, #a97539); }
.trash { margin-top: auto; }
.pip { position: absolute; left: -6px; top: 22px; border: 4px solid transparent; border-left: 5px solid #ddd6da; border-right: 0; }
.pip.right { left: auto; right: -6px; border-left: 0; border-right: 5px solid #ddd6da; }
.pip.multi { border: 0; width: 5px; height: 11px; top: 20px; background: repeating-linear-gradient(#ddd6da 0 3px, transparent 3px 4px); border-radius: 0 3px 3px 0; }

.browser { flex: 1; min-width: 0; display: flex; flex-direction: column; }
.tabstrip { height: 35px; flex: none; display: flex; align-items: flex-end; background: #3c3b37; border-bottom: 1px solid #252420; color: #dfdbd2; font-size: 14.4px; letter-spacing: -.12px; }
.tab { width: 165.7px; height: 32px; flex: none; display: flex; align-items: center; padding: 0 13px 0 9px; position: relative; }
.tab:not(.plainend)::after { content: ""; position: absolute; right: 0; top: 3px; width: 1px; height: 24px; background: #6d6b65; }
.tab.active { background: #f3f2f1; border-top: 2px solid #f08763; color: #45443f; height: 33px; margin-bottom: -1px; padding-bottom: 3px; }
.tab.active .close { color: #5a5953; }
.tab-title { width: 105px; margin-left: 6px; white-space: nowrap; overflow: hidden; -webkit-mask-image: linear-gradient(90deg, #000 72%, transparent 101%); mask-image: linear-gradient(90deg, #000 72%, transparent 101%); }
.close { margin-left: auto; color: #c9c5bd; }
.plus { margin: 0 0 9px 9px; }

.toolbar { height: 41px; flex: none; display: flex; align-items: center; background: #f3f2f1; border-bottom: 1px solid #bdb9b4; padding: 0 13px 0 3px; }
.back { width: 33px; height: 33px; flex: none; border-radius: 50%; border: 1px solid #b1aeaa; background: #fbfbfb; display: flex; align-items: center; justify-content: center; }
.fwd { margin-left: 8px; }
.reload { margin-left: 15px; }
.home { margin-left: 14px; }
.urlbar { width: 1382px; height: 30px; flex: none; margin-left: 125px; display: flex; align-items: center; padding: 0 7px 0 10px; background: #fff; border: 1px solid #bcb8b3; border-radius: 4px; }
.url { width: 1170px; margin-left: 8px; font-size: 15px; letter-spacing: -.15px; white-space: nowrap; overflow: hidden; color: #999; -webkit-mask-image: linear-gradient(90deg, #000 97%, transparent 99.8%); mask-image: linear-gradient(90deg, #000 97%, transparent 99.8%); }
.url b { font-weight: 400; color: #333; }
.zoom { margin-left: 33px; width: 42px; height: 17px; border: 1px solid #b9b9b9; border-radius: 9px; background: #f0f0f0; font-size: 11.5px; line-height: 15px; text-align: center; }
.rule { width: 1px; height: 22px; margin-left: 12px; background: #b5b5b5; }
.dots { margin-left: 12px; }
.pocket { margin: 0 11px 0 12px; }
.library { margin-left: auto; }
.side { margin: 0 10px 0 16px; }
.bar-rule { width: 1px; height: 33px; background: #d5d3d0; }
.menu { margin-left: 13px; }

.page { flex: 1; min-height: 0; display: flex; background: #f5f5f5; }
.sidebar { width: 161px; flex: none; display: flex; flex-direction: column; background: #005571; color: #fff; font-size: 10.8px; letter-spacing: .09px; }
.brand { height: 63px; flex: none; display: flex; align-items: flex-start; padding: 13px 0 0 9px; }
.word { margin: 5px 0 0 11px; }
.word text { font-family: "Open Sans", sans-serif; font-weight: 600; font-size: 22.5px; letter-spacing: 0; fill: #fff; }
.nav-item { height: 34px; flex: none; display: flex; padding-left: 16px; color: #e6eef1; }
.nav-item svg { margin-top: 7px; overflow: visible; }
.nav-item span { margin: 10px 0 0 21px; line-height: 16px; }
.nav-item.active { margin-top: 1px; background: #0079a5; }
.nav-foot { margin-top: auto; }
.nav-foot a { display: flex; align-items: flex-start; color: #e6eef1; }
.nav-foot span { line-height: 16px; margin-top: 4px; }
.space { padding-left: 13px; height: 21px; }
.space b { width: 21px; height: 21px; border-radius: 3px; background: #00bfb3; color: #000; font-weight: 400; text-align: center; line-height: 22px; }
.space span { margin-left: 19px; }
.collapse { height: 24px; padding: 0 0 0 16px; margin: 16px 0 2px; }
.collapse span { margin-left: 21px; }

.content { flex: 1; min-width: 0; display: flex; flex-direction: column; }
.topnav { height: 26px; flex: none; display: flex; justify-content: space-between; align-items: center; padding: 0 11px 0 9px; background: #fff; white-space: nowrap; }
.crumbs { display: flex; letter-spacing: .03px; }
.slash { margin: 0 7px; color: #666; }
.actions { display: flex; align-items: center; }
.actions a { color: #2d2d2d; margin-left: 21px; }
.auto, .range { display: flex; align-items: center; gap: 3px; }
.actions .auto { margin-left: 19px; }
.prev { margin-left: 22px; }
.actions .range { margin-left: 19px; gap: 4px; letter-spacing: -.07px; }
.next { margin-left: 21px; }
.searchrow { height: 43px; flex: none; display: flex; gap: 8px; padding: 0 9px 7px; background: #fff; }
.search { flex: 1; display: flex; align-items: center; padding: 0 14px 0 11px; background: #fafafa; border-bottom: 1px solid #eaeaea; color: #888; }
.search span { margin: 2px 0 0 11px; letter-spacing: .03px; }
.search a { margin: 4px 0 0 auto; }
.searchrow button { width: 100px; border: 0; border-radius: 3px; background: #0079a5; color: #fff; font: inherit; box-shadow: 0 2px 2px -1px rgba(0,0,0,.3); }
.filterbar { height: 35px; flex: none; display: flex; align-items: center; gap: 3px; padding-left: 12px; background: #f5f5f5; border: solid #d9d9d9; border-width: 1px 0; font-size: 10.8px; letter-spacing: .1px; }

.grid { flex: 1; min-height: 0; padding: 7px 7px 0; display: flex; flex-direction: column; gap: 8px; overflow: hidden; }
.row { flex: none; display: flex; }
.first { height: 293px; }
.second { height: 343px; }
.third { height: 370px; }
.panel { position: relative; flex: 1; min-width: 0; background: #fff; border: 1px solid #d9d9d9; border-radius: 4px; box-shadow: 0 2px 3px -1px rgba(0,0,0,.28); }
.w1 { flex: none; width: 446px; margin-right: 8px; }
.w2 { flex: none; width: 376px; margin-right: 9px; }
.w3 { flex: none; width: 831px; }
.w4 { flex: none; width: 830px; margin-right: 9px; }
.head { height: 30px; display: flex; justify-content: space-between; padding: 0 10px 0 8px; }
h2 { margin: 5px 0 0; font-size: 12.6px; line-height: 18px; font-weight: 400; letter-spacing: .05px; color: #666; }
.head svg { margin-top: 10px; }
.w1 .head, .w2 .head, .w4 .head { padding-right: 9px; }
.body { display: flex; }
.chart text { font-size: 10px; fill: #848e96; }
.chart .title { font-weight: 700; font-size: 10.8px; }
.axis path { fill: none; stroke: #ddd; stroke-width: 1; }
.bar { fill: #00a69b; fill-opacity: .8; }
.cell { stroke: #5f7f5f; stroke-opacity: .2; }
.chart .name { font-size: 12.6px; fill: #000; }
.chart .soft { fill: #2d2d2d; }
.chart .value { font-size: 24.3px; fill: #000; }
.legend { display: flex; padding: 17px 0 0 3px; font-size: 10.8px; letter-spacing: .05px; color: #666; }
.legend > svg { margin-top: 6px; }
ul { list-style: none; margin: 0 0 0 6px; padding: 0; }
li { display: flex; align-items: center; height: 17.6px; white-space: nowrap; }
li i { width: 9.5px; height: 9.5px; margin-right: 3px; border-radius: 50%; }
.grip { position: absolute; right: 6px; bottom: 5px; width: 5px; height: 5px; border: solid #555; border-width: 0 2px 2px 0; }
.metrics { height: 310px; display: flex; align-items: center; justify-content: center; gap: 28.5px; padding: 35px 0 0 2px; }
.metric { display: flex; flex-direction: column; align-items: center; text-align: center; width: min-content; }
.metric strong { font-size: 72px; line-height: 72px; font-weight: 700; }
.metric span { min-width: 100%; width: 0; margin-top: 2px; line-height: 12.600px; white-space: normal; }
.scroll { width: 10px; flex: none; background: #e5e4e3; }
.scroll i { display: block; height: 1060px; background: #f08c68; }
</style>
